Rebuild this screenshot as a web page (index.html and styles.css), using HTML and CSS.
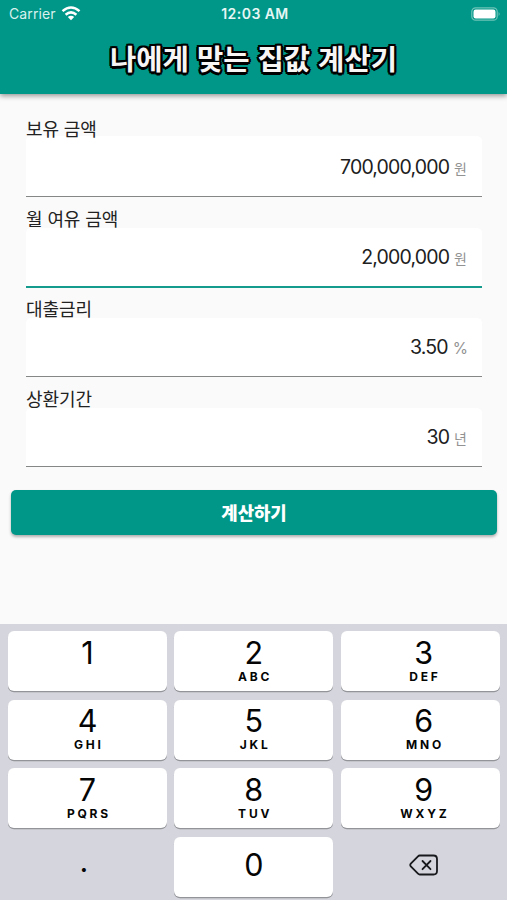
FILE: index.html
```html
<!DOCTYPE html>
<html lang="ko">
<head>
<meta charset="utf-8">
<title>나에게 맞는 집값 계산기</title>
<link rel="stylesheet" href="styles.css">
</head>
<body>
<div class="app">
  <header class="header">
    <div class="status">
      <div class="carrier"><span class="carrier-name">Carrier</span>
        <svg class="wifi" width="20" height="15" viewBox="0 0 20 15"><g fill="none" stroke="#fff" stroke-width="2.5"><path d="M1.5 5.1Q10-2.2 18.5 5.1"/><path d="M4.6 8.7Q10 4 15.4 8.7"/></g><path fill="#fff" d="M6.8 11Q10 8.4 13.2 11L10 14.3Z"/></svg>
      </div>
      <span class="clock">12:03 AM</span>
      <svg class="battery" width="30" height="14" viewBox="0 0 30 14"><rect x=".8" y=".8" width="25.4" height="12.4" rx="3.8" fill="none" stroke="#6fc3b8" stroke-width="1.2"/><rect x="2.5" y="2.5" width="22" height="9" rx="2.2" fill="#fff"/><path d="M27.6 5q2 2 0 4z" fill="#6fc3b8"/></svg>
    </div>
    <h1 class="title">나에게 맞는 집값 계산기</h1>
  </header>
  <main class="form">
    <div class="field field-first"><label class="label">보유 금액</label><div class="box"><span class="value">700,000,000</span><span class="unit">원</span></div></div>
    <div class="field"><label class="label">월 여유 금액</label><div class="box box-focus"><span class="value">2,000,000</span><span class="unit">원</span></div></div>
    <div class="field"><label class="label">대출금리</label><div class="box"><span class="value">3.50</span><span class="unit unit-percent">%</span></div></div>
    <div class="field"><label class="label">상환기간</label><div class="box"><span class="value">30</span><span class="unit">년</span></div></div>
    <button class="submit">계산하기</button>
  </main>
  <section class="keypad">
    <div class="key"><span class="digit">1</span></div>
    <div class="key"><span class="digit">2</span><span class="letters">ABC</span></div>
    <div class="key key-right"><span class="digit">3</span><span class="letters">DEF</span></div>
    <div class="key"><span class="digit">4</span><span class="letters">GHI</span></div>
    <div class="key"><span class="digit">5</span><span class="letters">JKL</span></div>
    <div class="key key-right"><span class="digit">6</span><span class="letters">MNO</span></div>
    <div class="key"><span class="digit">7</span><span class="letters">PQRS</span></div>
    <div class="key"><span class="digit">8</span><span class="letters">TUV</span></div>
    <div class="key key-right"><span class="digit">9</span><span class="letters">WXYZ</span></div>
    <div class="key key-plain key-dot"><span class="digit">.</span></div>
    <div class="key key-zero"><span class="digit">0</span></div>
    <div class="key key-right key-plain key-delete">
      <svg width="30" height="22" viewBox="0 0 30 22" fill="none" stroke="#18191c" stroke-width="1.8" stroke-linecap="round" stroke-linejoin="round"><path d="M10.7 1.5H24.5Q28 1.5 28 5V17Q28 20.5 24.5 20.5H10.7Q9.8 20.5 9 19.7L1.8 12.3Q.7 11 1.8 9.7L9 2.3Q9.8 1.5 10.7 1.5Z"/><path d="M13.5 7L21.5 15.2M21.5 7L13.5 15.2"/></svg>
    </div>
  </section>
</div>
</body>
</html>
```
FILE: styles.css
```css
* { box-sizing: border-box; }
body { margin: 0; font-family: Inter, "Noto Sans CJK KR", sans-serif; background: #fafafa; }
.app { width: 507px; height: 900px; display: flex; flex-direction: column; overflow: hidden; }
.header { height: 94px; flex: none; background: #009788; color: #fff; box-shadow: 0 2px 5px rgba(0,0,0,.4); }
.status { height: 27px; padding: 0 6px 0 9px; display: grid; grid-template-columns: 1fr auto 1fr; align-items: center; font-size: 14px; line-height: 28px; }
.carrier { display: flex; align-items: center; gap: 6px; color: #d9f1ee; }
.carrier-name { font-size: 14px; letter-spacing: .1px; }
.wifi { margin: -1px 0 0 -1px; }
.clock { font-size: 14px; font-weight: 600; letter-spacing: .45px; color: #e6f6f4; }
.battery { justify-self: end; margin-top: -1px; }
.title { margin: 8px 0 0; text-align: center; font: 700 28.6px/46px "Noto Sans CJK KR", sans-serif; color: #f8f5f5;
  text-shadow: 2.5px 0 #000, -2.5px 0 #000, 0 2.5px #000, 0 -2.5px #000, 1.8px 1.8px #000, -1.8px 1.8px #000, 1.8px -1.8px #000, -1.8px -1.8px #000; }
.form { flex: 1; padding: 23px 10px 0 11px; }
.field { height: 90px; padding: 0 15px; display: flex; flex-direction: column; }
.label { position: relative; z-index: 1; height: 21px; flex: none; font: 400 18px/22px "Noto Sans CJK KR", sans-serif; letter-spacing: -.1px; color: #222; white-space: pre; }
.field-first .label { height: 19px; }
.box { height: 59px; border-bottom: 1.5px solid #858787; border-radius: 5px 5px 0 0; background: #fff; padding: 0 15px 0 0; display: flex; justify-content: flex-end; align-items: baseline; gap: 5px; line-height: 59px; }
.field-first .box { height: 61px; line-height: 63px; }
.box-focus { height: 60px; border-bottom: 2.5px solid #159b8e; }
.value { font-size: 19.5px; letter-spacing: -.85px; color: #202020; }
.unit { font-size: 14px; color: #929292; }
.unit-percent { font-size: 15.5px; margin-right: -1px; }
.submit { display: block; width: 100%; height: 45px; margin-top: 13px; padding: 0; border: 0; border-radius: 5px; background: #009788; color: #fff; box-shadow: 0 2px 3px rgba(0,0,0,.3); font: 900 17.8px/43px "Noto Sans CJK KR", sans-serif; }
.keypad { flex: none; height: 276px; padding: 7px 8px 0; background: #d5d6dd; display: grid; grid-template-columns: repeat(3, 159px); grid-auto-rows: 60px; column-gap: 7.3px; row-gap: 8.6px; color: #050505; }
.key { border-radius: 6px; background: #fff; box-shadow: 0 1.2px 0 #929499; display: flex; flex-direction: column; align-items: center; }
.key-right { padding-left: 7px; }
.digit { font-size: 30.5px; font-weight: 400; line-height: 36px; margin-top: 3.5px; }
.letters { font-size: 12px; line-height: 12px; font-weight: 700; letter-spacing: 2.8px; margin-right: -2.8px; }
.key-plain { background: none; box-shadow: none; }
.key-dot .digit { margin: 6px 7px 0 0; }
.key-zero .digit { margin-top: 10.5px; }
.key-delete { justify-content: center; padding-bottom: 3px; }
```
